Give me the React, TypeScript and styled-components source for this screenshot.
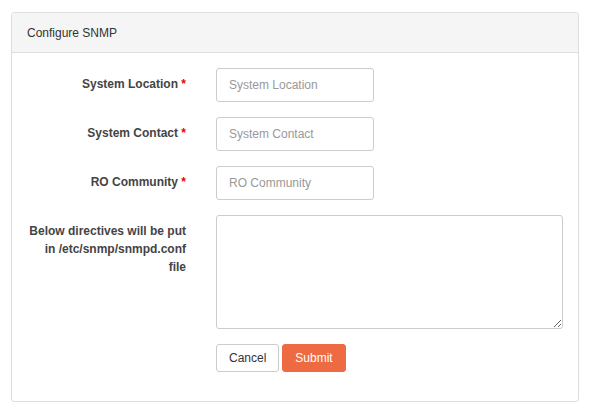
import React from 'react';
import styled, { createGlobalStyle } from 'styled-components';

const Global = createGlobalStyle`
  body { margin: 0; background: #fff; font-family: "Liberation Sans", Arial, sans-serif; }
`;

const Page = styled.div`
  padding: 12px 12px 0 11px;
`;

const Panel = styled.div`
  width: 568px;
  height: 390px;
  border: 1px solid #dddddd;
  border-radius: 3px;
  box-sizing: border-box;
`;

const Header = styled.div`
  height: 40px;
  background: #f5f5f5;
  border-bottom: 1px solid #dddddd;
  box-sizing: border-box;
  padding: 0 15px;
  display: flex;
  align-items: center;
  font-size: 12px;
  color: #333;
`;

const Body = styled.div`
  padding: 15px 15px 0 0;
  display: flex;
  flex-direction: column;
  gap: 15px;
`;

const Row = styled.div`
  display: flex;
  gap: 30px;
`;

const Label = styled.label`
  width: 159px;
  margin-left: 15px;
  text-align: right;
  font-size: 12px;
  font-weight: bold;
  color: #444;
  line-height: 18px;
  padding-top: 7px;
  flex-shrink: 0;
`;

const Req = styled.span`
  color: #e00;
`;

const Input = styled.input`
  width: 158px;
  height: 34px;
  box-sizing: border-box;
  border: 1px solid #cccccc;
  border-radius: 3px;
  padding: 0 12px;
  font-family: inherit;
  font-size: 12px;
  &::placeholder { color: #999; }
`;

const Area = styled.textarea`
  width: 348px;
  height: 114px;
  box-sizing: border-box;
  border: 1px solid #cccccc;
  border-radius: 3px;
`;

const Buttons = styled.div`
  display: flex;
  gap: 3px;
  margin-left: 204px;
`;

const Button = styled.button<{ primary?: boolean }>`
  height: 28px;
  padding: 0 12px;
  font-family: inherit;
  font-size: 12px;
  border-radius: 3px;
  border: 1px solid ${({ primary }) => (primary ? '#ee6a43' : '#cccccc')};
  background: ${({ primary }) => (primary ? '#ee6a43' : '#fff')};
  color: ${({ primary }) => (primary ? '#fff' : '#333')};
`;

const fields = ['System Location', 'System Contact', 'RO Community'];

export default function App() {
  return (
    <Page>
      <Global />
      <Panel>
        <Header>Configure SNMP</Header>
        <Body>
          {fields.map(f => (
            <Row key={f}>
              <Label>{f} <Req>*</Req></Label>
              <Input placeholder={f} />
            </Row>
          ))}
          <Row>
            <Label>Below directives will be put in /etc/snmp/snmpd.conf file</Label>
            <Area />
          </Row>
          <Buttons>
            <Button>Cancel</Button>
            <Button primary>Submit</Button>
          </Buttons>
        </Body>
      </Panel>
    </Page>
  );
}
